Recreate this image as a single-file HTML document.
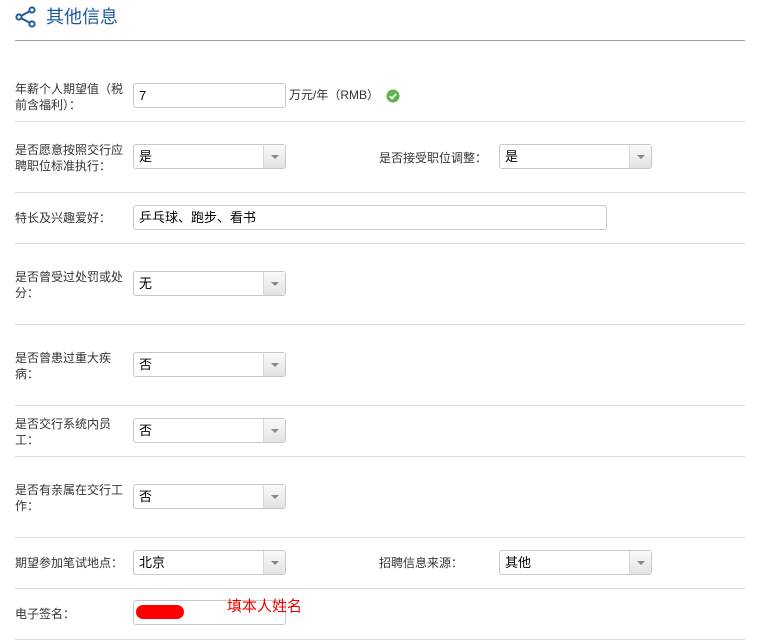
<!DOCTYPE html>
<html><head><meta charset="utf-8"><style>
body{margin:0;width:766px;height:641px;background:#fff;position:relative;overflow:hidden;font-family:"Liberation Sans","Noto Sans CJK SC",sans-serif;}
.a{position:absolute}
.t{position:absolute;font-size:12px;color:#333;line-height:16px;white-space:nowrap}
.hr{position:absolute;left:15px;width:730px;height:1px;background:#ddd}
.in{position:absolute;box-sizing:border-box;height:25px;border:1px solid #c8c8c8;border-radius:3px;background:#fff;font-size:13px;color:#000;line-height:23px;padding-left:5px}
.sel{position:absolute;box-sizing:border-box;width:153px;height:25px;border:1px solid #c8c8c8;border-radius:3px;background:#fff;font-size:13px;color:#000;line-height:23px;padding-left:5px}
.sel:after{content:"";position:absolute;right:0;top:0;width:21px;height:23px;border-left:1px solid #d8d8d8;background:linear-gradient(#fafafa,#e2e2e2)}
.sel:before{content:"";position:absolute;right:6px;top:10px;border-left:4px solid transparent;border-right:4px solid transparent;border-top:4px solid #888;z-index:2}
</style></head><body>
<svg class="a" style="left:15px;top:6px" width="22" height="22" viewBox="0 0 22 22"><g fill="none" stroke="#1d5a9c" stroke-width="2"><circle cx="4" cy="11" r="2.6"/><circle cx="17" cy="4" r="2.6"/><circle cx="17" cy="18" r="2.6"/><path d="M6.3 9.7L14.7 5.3M6.3 12.3L14.7 16.7"/></g></svg>
<div class="a" style="left:46px;top:5px;font-size:18px;color:#1d5a9c;line-height:24px">其他信息</div>
<div class="a" style="left:15px;top:40px;width:730px;height:1px;background:#a0a0a0"></div>

<div class="t" style="left:15px;top:81px">年薪个人期望值（税</div>
<div class="t" style="left:15px;top:97px">前含福利）：</div>
<div class="in" style="left:133px;top:83px;width:153px">7</div>
<div class="t" style="left:289px;top:87px">万元/年（RMB）</div>
<svg class="a" style="left:386px;top:89px" width="14" height="14"><circle cx="7" cy="7" r="6.5" fill="#5cb54a"/><path d="M3.8 7.2l2.2 2.2 4.2-4.4" stroke="#fff" stroke-width="1.8" fill="none"/></svg>
<div class="hr" style="top:121px"></div>

<div class="t" style="left:15px;top:142px">是否愿意按照交行应</div>
<div class="t" style="left:15px;top:158px">聘职位标准执行：</div>
<div class="sel" style="left:133px;top:144px">是</div>
<div class="t" style="left:379px;top:150px">是否接受职位调整：</div>
<div class="sel" style="left:499px;top:144px">是</div>
<div class="hr" style="top:192px"></div>

<div class="t" style="left:15px;top:210px">特长及兴趣爱好：</div>
<div class="in" style="left:133px;top:205px;width:474px">乒乓球、跑步、看书</div>
<div class="hr" style="top:243px"></div>

<div class="t" style="left:15px;top:269px">是否曾受过处罚或处</div>
<div class="t" style="left:15px;top:285px">分：</div>
<div class="sel" style="left:133px;top:271px">无</div>
<div class="hr" style="top:324px"></div>

<div class="t" style="left:15px;top:350px">是否曾患过重大疾</div>
<div class="t" style="left:15px;top:366px">病：</div>
<div class="sel" style="left:133px;top:352px">否</div>
<div class="hr" style="top:405px"></div>

<div class="t" style="left:15px;top:416px">是否交行系统内员</div>
<div class="t" style="left:15px;top:432px">工：</div>
<div class="sel" style="left:133px;top:418px">否</div>
<div class="hr" style="top:456px"></div>

<div class="t" style="left:15px;top:482px">是否有亲属在交行工</div>
<div class="t" style="left:15px;top:498px">作：</div>
<div class="sel" style="left:133px;top:484px">否</div>
<div class="hr" style="top:537px"></div>

<div class="t" style="left:15px;top:555px">期望参加笔试地点：</div>
<div class="sel" style="left:133px;top:550px">北京</div>
<div class="t" style="left:379px;top:555px">招聘信息来源：</div>
<div class="sel" style="left:499px;top:550px">其他</div>
<div class="hr" style="top:588px"></div>

<div class="t" style="left:15px;top:606px">电子签名：</div>
<div class="in" style="left:133px;top:600px;width:153px"></div>
<div class="a" style="left:136px;top:605px;width:48px;height:14px;background:#f00;border-radius:8px"></div>
<div class="a" style="left:227px;top:598px;font-size:15px;color:#e00;line-height:18px">填本人姓名</div>
<div class="hr" style="top:639px"></div>
</body></html>
